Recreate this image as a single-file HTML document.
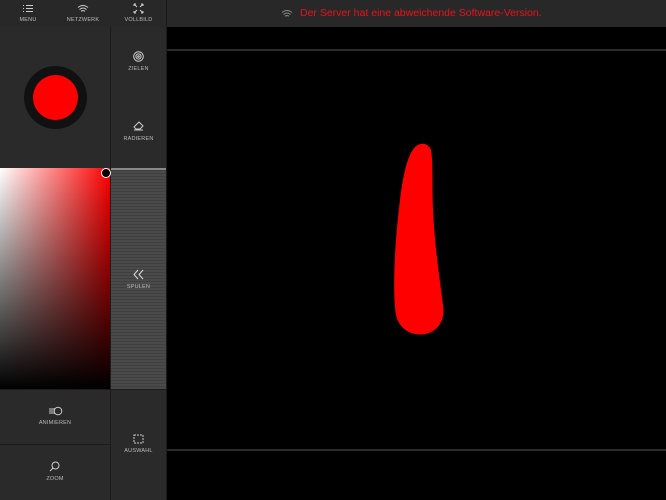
<!DOCTYPE html>
<html><head><style>
*{margin:0;padding:0;box-sizing:border-box}
body{width:666px;height:500px;background:#000;position:relative;overflow:hidden;font-family:"Liberation Sans",sans-serif}
.a{position:absolute}
.lbl{position:absolute;width:100%;text-align:center;font-size:5.5px;color:#bbb;letter-spacing:.2px}
</style></head><body>
<div class="a" style="left:0;top:0;width:666px;height:27px;background:#282828"></div>
<div class="a" style="left:166px;top:0;width:1px;height:27px;background:#1a1a1a"></div>
<!-- top icons -->
<div class="a" style="left:0;top:0;width:56px;height:27px">
<svg class="a" style="left:22px;top:4px" width="12" height="9" stroke="#ccc" stroke-width="1"><path d="M1 1.5h1M4 1.5h7M1 4.5h1M4 4.5h7M1 7.5h1M4 7.5h7"/></svg>
<div class="lbl" style="top:17px">MENU</div></div>
<div class="a" style="left:56px;top:0;width:54px;height:27px">
<svg class="a" style="left:21px;top:4px" width="12" height="9" fill="none" stroke="#ccc" stroke-width="1"><path d="M1 3.5Q6-0.5 11 3.5M2.5 5.5Q6 2.5 9.5 5.5M4 7.3Q6 5.8 8 7.3"/></svg>
<div class="lbl" style="top:17px">NETZWERK</div></div>
<div class="a" style="left:111px;top:0;width:55px;height:27px">
<svg class="a" style="left:22px;top:3px" width="11" height="11" fill="none" stroke="#ccc" stroke-width="1"><path d="M1 1l3 3M1 1h2M1 1v2M10 1l-3 3M10 1h-2M10 1v2M1 10l3-3M1 10h2M1 10v-2M10 10l-3-3M10 10h-2M10 10v-2"/></svg>
<div class="lbl" style="top:17px">VOLLBILD</div></div>
<svg class="a" style="left:281px;top:9px" width="12" height="9" fill="none" stroke="#888" stroke-width="1"><path d="M1 3.5Q6-0.5 11 3.5M2.5 5.5Q6 2.5 9.5 5.5M4 7.3Q6 5.8 8 7.3"/></svg>
<div class="a" style="left:300px;top:7px;font-size:10.5px;color:#e8141b">Der Server hat eine abweichende Software-Version.</div>
<!-- canvas lines -->
<div class="a" style="left:167px;top:49px;width:499px;height:2px;background:#2a2a2a"></div>
<div class="a" style="left:167px;top:449px;width:499px;height:2px;background:#2a2a2a"></div>
<!-- left panel -->
<div class="a" style="left:0;top:27px;width:166px;height:473px;background:#2a2a2a"></div>
<div class="a" style="left:110px;top:27px;width:1px;height:473px;background:#1c1c1c"></div>
<div class="a" style="left:166px;top:27px;width:1px;height:473px;background:#1a1a1a"></div>
<div class="a" style="left:24px;top:66px;width:63px;height:63px;border-radius:50%;background:#111"></div>
<div class="a" style="left:33px;top:75px;width:45px;height:45px;border-radius:50%;background:#ff0000"></div>
<div class="a" style="left:111px;top:27px;width:55px;height:141px">
<svg class="a" style="left:22px;top:24px" width="11" height="11" fill="none" stroke="#ccc" stroke-width="1"><circle cx="5.5" cy="5.5" r="4.8"/><circle cx="5.5" cy="5.5" r="2.6"/><circle cx="5.5" cy="5.5" r=".8"/></svg>
<div class="lbl" style="top:39px">ZIELEN</div>
<svg class="a" style="left:22px;top:94px" width="11" height="10" fill="none" stroke="#ccc" stroke-width="1"><path d="M1 6l5-5 4 4-3 3H3zM1 9h9"/></svg>
<div class="lbl" style="top:109px">RADIEREN</div></div>
<div class="a" style="left:0;top:168px;width:110px;height:221px;background:linear-gradient(to bottom,rgba(0,0,0,0),#000),linear-gradient(to right,#fff,#f00)"></div>
<div class="a" style="left:101px;top:168px;width:10px;height:10px;border-radius:50%;background:#000;border:1.5px solid #fff"></div>
<div class="a" style="left:111px;top:168px;width:55px;height:221px;background:repeating-linear-gradient(to bottom,#4a4a4a 0,#4a4a4a 2px,#3f3f3f 2px,#3f3f3f 3px)"></div>
<div class="a" style="left:111px;top:168px;width:55px;height:2px;background:#888"></div>
<svg class="a" style="left:133px;top:269px" width="11" height="11" fill="none" stroke="#ddd" stroke-width="1"><path d="M5 1L1 5.5 5 10M10 1L6 5.5 10 10"/></svg>
<div class="lbl" style="left:111px;width:55px;top:284px">SPULEN</div>
<div class="a" style="left:0;top:389px;width:166px;height:1px;background:#1c1c1c"></div>
<div class="a" style="left:0;top:444px;width:110px;height:1px;background:#1c1c1c"></div>
<svg class="a" style="left:49px;top:406px" width="14" height="10" fill="none" stroke="#ccc" stroke-width="1"><circle cx="9" cy="5" r="3.8"/><path d="M1 2v6M3 2v6M5 2v6"/></svg>
<div class="lbl" style="left:0;width:110px;top:420px">ANIMIEREN</div>
<svg class="a" style="left:49px;top:461px" width="11" height="11" fill="none" stroke="#ccc" stroke-width="1"><circle cx="6.5" cy="4.5" r="3.5"/><path d="M4 7L1 10"/></svg>
<div class="lbl" style="left:0;width:110px;top:476px">ZOOM</div>
<svg class="a" style="left:133px;top:434px" width="11" height="10" fill="none" stroke="#ccc" stroke-width="1" stroke-dasharray="2 1"><rect x="1" y="1" width="9" height="8"/></svg>
<div class="lbl" style="left:111px;width:55px;top:448px">AUSWAHL</div>
<!-- stroke -->
<svg class="a" style="left:0;top:0" width="666" height="500"><path fill="#ff0000" d="M421 144C412 145 405 160 400 200C395 240 392 290 396 315C400 332 415 336 425 334C440 331 445 318 443 305C440 280 435 250 433 210C432 180 433 160 431 150C429 145 425 143 421 144Z"/></svg>
</body></html>
